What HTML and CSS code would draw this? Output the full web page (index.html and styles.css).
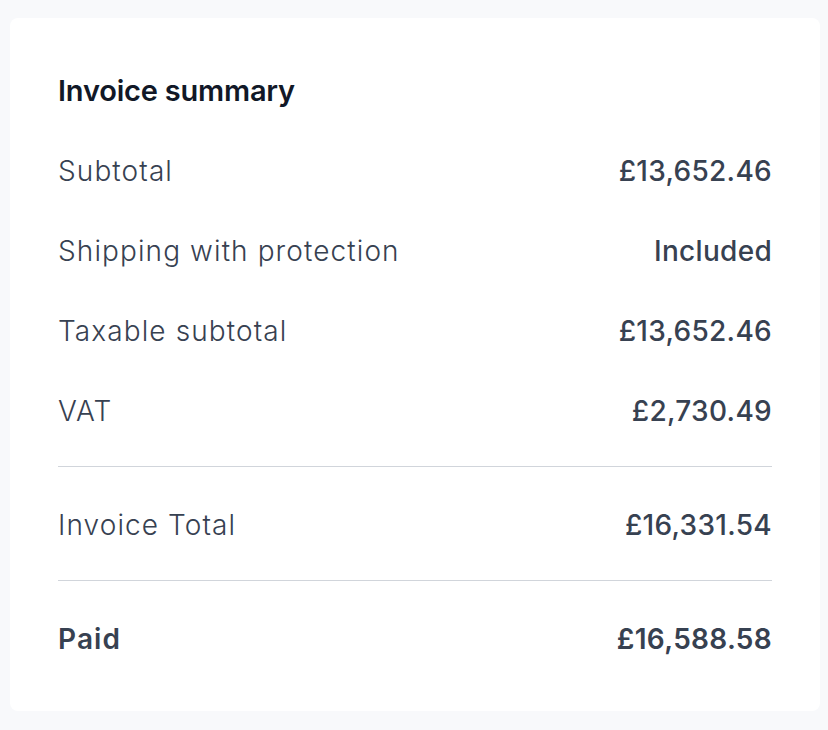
FILE: index.html
```html
<!DOCTYPE html>
<html lang="en">
<head>
  <meta charset="UTF-8">
  <meta name="viewport" content="width=device-width, initial-scale=1.0">
  <title>Invoice summary</title>
  <link rel="stylesheet" href="styles.css">
</head>
<body>

  <!-- Invoice summary card -->
  <div class="card">
    <h2 class="card-title">Invoice summary</h2>

    <div class="row">
      <span class="label">Subtotal</span>
      <span class="value">£13,652.46</span>
    </div>
    <div class="row">
      <span class="label">Shipping with protection</span>
      <span class="value">Included</span>
    </div>
    <div class="row">
      <span class="label">Taxable subtotal</span>
      <span class="value">£13,652.46</span>
    </div>
    <div class="row">
      <span class="label">VAT</span>
      <span class="value">£2,730.49</span>
    </div>

    <div class="divider"></div>

    <div class="row">
      <span class="label">Invoice Total</span>
      <span class="value">£16,331.54</span>
    </div>

    <div class="divider"></div>

    <div class="row row-strong">
      <span class="label">Paid</span>
      <span class="value">£16,588.58</span>
    </div>
  </div>

</body>
</html>
```

FILE: styles.css
```css
body {
  font-family: Inter, "Noto Sans", Arial, sans-serif;
  background-color: #f8f9fb;
  margin: 0;
  padding: 18px 8px 20px 10px;
  color: #374151;
}
.card {
  background-color: #ffffff;
  border-radius: 8px;
  padding: 53px 48px 52px;
}
.card-title {
  margin: 0 0 40px;
  font-size: 29px;
  line-height: 40px;
  font-weight: 600;
  letter-spacing: -0.2px;
  color: #111827;
}
.row {
  display: flex;
  justify-content: space-between;
  align-items: center;
  font-size: 28px;
  line-height: 40px;
}
.row + .row {
  margin-top: 40px;
}
.label {
  font-weight: 300;
  letter-spacing: 1.1px;
}
.value {
  font-weight: 500;
  letter-spacing: 0.3px;
}
.row-strong .label,
.row-strong .value {
  font-weight: 600;
}
.divider {
  height: 1px;
  background-color: #d1d5db;
  margin: 35px 0 38px;
}
```
